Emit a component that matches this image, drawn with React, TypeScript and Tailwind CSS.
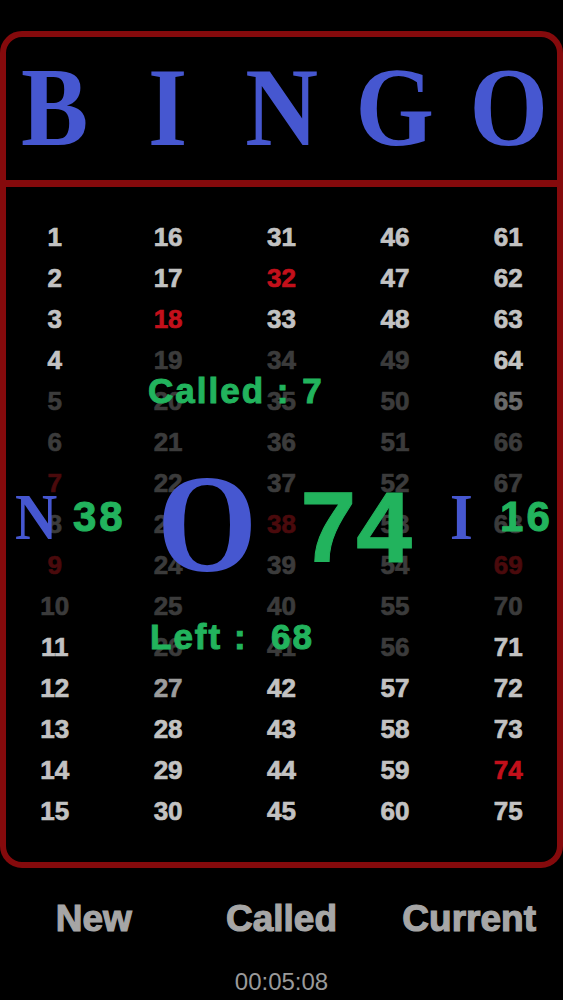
import React from 'react';

const LETTERS = ['B', 'I', 'N', 'G', 'O'];

const DIM = new Set([5, 6, 8, 10, 19, 20, 21, 22, 23, 24, 25, 26, 34, 35, 36, 37, 39, 40, 41, 49, 50, 51, 52, 53, 54, 55, 56, 66, 67, 68, 70]);
const RED = new Set([18, 32, 74]);
const DIM_RED = new Set([7, 9, 38, 69]);

function numberColor(n: number): string {
  if (RED.has(n)) return 'text-[#c3101b]';
  if (DIM_RED.has(n)) return 'text-[#4a0a0c]';
  if (n === 65) return 'text-[#6a6a6a]';
  if (n === 27) return 'text-[#9c9c9c]';
  if (DIM.has(n)) return 'text-[#3b3b3b]';
  return 'text-[#c2c2c2]';
}

// row-major list: row r, column c -> c*15 + r + 1
const cells: number[] = [];
for (let r = 0; r < 15; r++) {
  for (let c = 0; c < 5; c++) cells.push(c * 15 + r + 1);
}

const sans = "font-['Liberation_Sans',Arial,sans-serif]";
const serif = "font-['Liberation_Serif','Times_New_Roman',serif]";

export default function App(): React.ReactElement {
  return (
    <div className="relative h-[1000px] w-[563px] overflow-hidden bg-black pt-[31px]">
      {/* board */}
      <div className="flex flex-col rounded-[22px] border-[6px] border-[#850a0c]">
        <div className="flex h-[150px] items-center border-b-[7px] border-[#850a0c] pb-[3px]">
          <div className={`-mx-2 grid flex-1 grid-cols-5 text-center ${serif} text-[112px] leading-none font-bold text-[#4657d0]`}>
            {LETTERS.map((l) => (
              <span key={l} className="scale-x-90">
                {l}
              </span>
            ))}
          </div>
        </div>
        <div className={`-mx-2 grid grid-cols-5 pt-[29px] pb-[31px] ${sans} text-[26px] leading-none font-bold [-webkit-text-stroke:0.7px_currentColor]`}>
          {cells.map((n) => (
            <div key={n} className={`flex h-[41px] items-center justify-center ${numberColor(n)}`}>
              {n}
            </div>
          ))}
        </div>
      </div>

      {/* overlay: current call, drawn over the board */}
      <div className={`absolute inset-x-0 top-[373px] flex flex-col ${sans} font-bold leading-none text-[#22b35d]`}>
        <span className="pl-[148px] text-[35px] tracking-[2px] whitespace-pre [-webkit-text-stroke:1px_currentColor]">Called : 7</span>
        <div className="mt-[39px] flex h-[140px] items-center pl-[15px]">
          <span className={`${serif} origin-left scale-x-90 text-[65px] text-[#4657d0]`}>N</span>
          <span className="ml-[11px] text-[42px] tracking-[3px] [-webkit-text-stroke:1px_currentColor]">38</span>
          <span className={`${serif} mt-[14px] ml-[31px] origin-left scale-x-[0.92] text-[140px] text-[#4657d0]`}>O</span>
          <span className="mt-[20px] ml-[35px] text-[100px] [-webkit-text-stroke:1px_currentColor]">74</span>
          <span className={`${serif} ml-[38px] origin-left scale-x-90 text-[65px] text-[#4657d0]`}>I</span>
          <span className="ml-[25px] text-[42px] tracking-[3px] [-webkit-text-stroke:1px_currentColor]">16</span>
        </div>
        <span className="mt-[32px] pl-[150px] text-[35px] tracking-[2px] whitespace-pre [-webkit-text-stroke:1px_currentColor]">Left :  68</span>
      </div>

      {/* controls */}
      <div className={`mt-[32px] grid grid-cols-3 text-center ${sans} text-[37px] leading-none font-bold text-[#a6a6a6] [-webkit-text-stroke:1.2px_currentColor]`}>
        <button type="button">New</button>
        <button type="button">Called</button>
        <button type="button">Current</button>
      </div>
      <div className={`mt-[33px] text-center ${sans} text-[24px] leading-none text-[#9a9a9a]`}>00:05:08</div>
    </div>
  );
}
